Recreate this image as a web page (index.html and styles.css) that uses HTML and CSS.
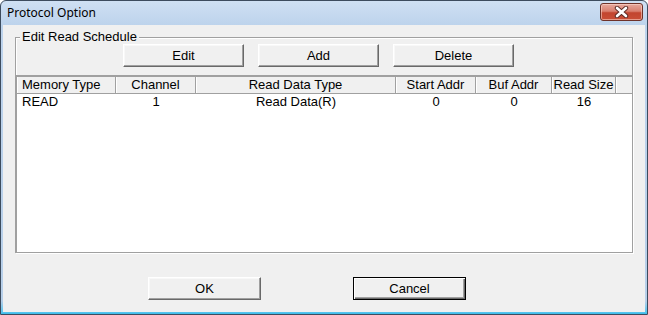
FILE: index.html
```html
<!DOCTYPE html>
<html>
<head>
<meta charset="utf-8">
<link rel="stylesheet" href="styles.css">
</head>
<body>
<div class="window">
  <div class="titlebar">
    <span class="title">Protocol Option</span>
    <div class="close">
      <svg width="17" height="12" viewBox="0 0 17 12">
        <path d="M4 2 L13 10 M13 2 L4 10" stroke="#5a2a24" stroke-width="4.4" stroke-linecap="round" fill="none"/>
        <path d="M4 2 L13 10 M13 2 L4 10" stroke="#ffffff" stroke-width="2.6" stroke-linecap="round" fill="none"/>
      </svg>
    </div>
  </div>
  <div class="client">
    <div class="group">
      <span class="group-label">Edit Read Schedule</span>
      <div class="toolbar">
        <div class="btn wide">Edit</div>
        <div class="btn wide">Add</div>
        <div class="btn wide">Delete</div>
      </div>
      <div class="list">
        <div class="header">
          <div class="hcell c1 left">Memory Type</div>
          <div class="hcell c2">Channel</div>
          <div class="hcell c3">Read Data Type</div>
          <div class="hcell c4">Start Addr</div>
          <div class="hcell c5">Buf Addr</div>
          <div class="hcell c6">Read Size</div>
          <div class="hcell rest"></div>
        </div>
        <div class="row">
          <div class="cell c1 left">READ</div>
          <div class="cell c2">1</div>
          <div class="cell c3">Read Data(R)</div>
          <div class="cell c4">0</div>
          <div class="cell c5">0</div>
          <div class="cell c6">16</div>
        </div>
      </div>
    </div>
    <div class="footer">
      <div class="btn dlg">OK</div>
      <div class="btn dlg default">Cancel</div>
    </div>
  </div>
</div>
</body>
</html>
```
FILE: styles.css
```css
html, body {
  margin: 0;
  padding: 0;
  background: #ffffff;
}
body {
  width: 648px;
  height: 315px;
  overflow: hidden;
  font-family: "Liberation Sans", Arial, sans-serif;
  font-size: 13px;
  color: #000;
}
.window {
  box-sizing: border-box;
  width: 648px;
  height: 315px;
  border: 1px solid #3d4c5e;
  border-radius: 6px 6px 0 0;
  background: linear-gradient(to bottom, #cfe0f3 0px, #bdd3ec 24px, #b7cfe9 300px, #5cc6ef 311px, #3bbbe9 313px);
  display: flex;
  flex-direction: column;
}
.titlebar {
  height: 24px;
  flex: none;
  display: flex;
  align-items: center;
  justify-content: space-between;
  padding: 0 4px 0 6px;
}
.title {
  font-family: "Noto Sans", "Open Sans", sans-serif;
  font-size: 12px;
  color: #000;
  margin-top: -2px;
}
.close {
  box-sizing: border-box;
  width: 43px;
  height: 18px;
  margin-top: -3px;
  border: 1px solid #6e3229;
  border-radius: 3px;
  background: linear-gradient(to bottom, #e7a89d 0%, #d9806f 45%, #c2452f 55%, #c94f37 100%);
  box-shadow: inset 0 0 0 1px rgba(255, 220, 210, 0.55);
  display: flex;
  align-items: center;
  justify-content: center;
}
.close svg {
  display: block;
}
.client {
  flex: 1;
  margin: 0 2px 2px 2px;
  background: #f0f0f0;
  display: flex;
  flex-direction: column;
}
.group {
  position: relative;
  box-sizing: border-box;
  margin: 12px 12px 0 12px;
  height: 216px;
  border: 1px solid #a0a0a0;
  box-shadow: inset 1px 1px #ffffff, 1px 1px #ffffff;
  display: flex;
  flex-direction: column;
}
.group-label {
  position: absolute;
  top: -9px;
  left: 4px;
  padding: 0 2px;
  background: #f0f0f0;
  line-height: 15px;
}
.toolbar {
  display: flex;
  gap: 14px;
  margin-top: 6px;
  padding-left: 107px;
}
.btn {
  box-sizing: border-box;
  height: 23px;
  display: flex;
  align-items: center;
  justify-content: center;
  background: #f0f0f0;
  border: 1px solid;
  border-color: #ffffff #696969 #696969 #ffffff;
  box-shadow: inset -1px -1px #a0a0a0, inset 1px 1px #f8f8f8;
}
.btn.wide {
  width: 121px;
}
.btn.dlg {
  width: 113px;
}
.btn.default {
  border: 1px solid #000;
  box-shadow: inset 1px 1px #ffffff, inset -1px -1px #696969, inset -2px -2px #a0a0a0;
}
.list {
  flex: 1;
  margin: 8px -1px -1px -1px;
  background: #ffffff;
  border: 1px solid #a0a0a0;
  box-shadow: inset 1px 1px #a0a0a0;
  display: flex;
  flex-direction: column;
  padding: 1px 0 0 1px;
}
.header {
  display: flex;
  height: 16px;
  border-bottom: 1px solid #a0a0a0;
  background: #f0f0f0;
}
.hcell {
  box-sizing: border-box;
  height: 16px;
  line-height: 15px;
  text-align: center;
  border-right: 1px solid #a0a0a0;
  box-shadow: inset 1px 0 #ffffff;
  white-space: nowrap;
  overflow: hidden;
}
.hcell.rest {
  flex: 1;
  border-right: 0;
}
.row {
  display: flex;
  height: 15px;
  line-height: 15px;
}
.cell {
  box-sizing: border-box;
  text-align: center;
  white-space: nowrap;
}
.left {
  text-align: left;
  padding-left: 5px;
}
.c1 { width: 99px; }
.c2 { width: 80px; }
.c3 { width: 200px; }
.c4 { width: 80px; }
.c5 { width: 76px; }
.c6 { width: 64px; }
.footer {
  display: flex;
  gap: 92px;
  margin-top: 24px;
  padding-left: 145px;
}
```
